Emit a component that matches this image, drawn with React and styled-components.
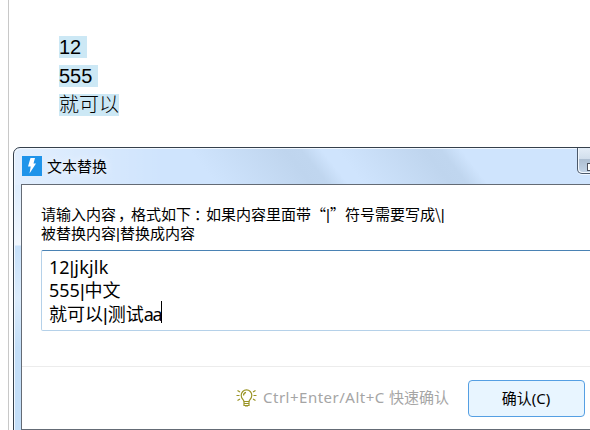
import React from "react";
import styled, { createGlobalStyle } from "styled-components";

const GlobalStyle = createGlobalStyle`
  * {
    box-sizing: border-box;
  }
  html, body {
    margin: 0;
    padding: 0;
    overflow: hidden;
    background: #fff;
  }
`

const Desktop = styled.div`
  position: relative;
  width: 590px;
  height: 430px;
  overflow: hidden;
  background: #fff;
  color: #000;
  font-family: "Noto Sans CJK SC", sans-serif;
`

const Page = styled.div`
  display: flex;
  flex-direction: column;
  align-items: flex-start;
  gap: 7px;
  height: 430px;
  margin-left: 8px;
  padding: 36px 0 0 50px;
  border-left: 1px solid #c8c8c8;
`

const Selected = styled.span`
  width: ${props => props.$width}px;
  height: 22px;
  background: #cce8f5;
  font-family: "Liberation Sans", "Noto Sans CJK SC", sans-serif;
  font-size: 20px;
  font-weight: ${props => props.$light ? 300 : 400};
  line-height: 22px;
  white-space: nowrap;
`

const Dialog = styled.div`
  position: absolute;
  left: 13px;
  top: 147px;
  width: 640px;
  height: 300px;
  padding: 0 7px;
  border: 1px solid #35404c;
  border-radius: 7px 7px 0 0;
  background:
    linear-gradient(90deg, rgba(255,255,255,0.4) 0, rgba(255,255,255,0) 150px) 0 0 / 100% 37px no-repeat,
    linear-gradient(52deg, #cfe4fd 0 160px, #bfd5ee 235px, #c0d6ef 248px, #cfe4fd 264px 276px, #bfd5ee 345px, #c0d6ef 358px, #cfe4fd 374px) 0 0 / 100% 37px no-repeat,
    linear-gradient(180deg, #deedfd 0 40px, #f1f7fe 97px, #c6e0fa 98px, #dcecfc 150px, #c3def8 200px, #c3def8 100%);
  box-shadow: inset 1px 1px 0 #f2f8ff;
`

const TitleBar = styled.div`
  display: flex;
  align-items: center;
  height: 36px;
  padding-left: 1px;
`

const AppIcon = styled.svg`
  width: 20px;
  height: 20px;
  display: block;
`

const Title = styled.span`
  margin-left: 5px;
  font-size: 15px;
  line-height: 20px;
  text-shadow: 0 0 8px #fff;
`

const WindowButton = styled.div`
  position: absolute;
  left: 563px;
  top: 0;
  width: 32px;
  height: 26px;
  border: 1px solid #4b596b;
  border-top: 0;
  border-radius: 0 0 0 5px;
  background: linear-gradient(180deg, #e4edf7 0, #d1deec 44%, #aebfd2 46%, #c3d4e7 100%);
  box-shadow: inset 1px -1px 0 #f3f8fd, 0 1px 0 #edf5ff;
  &::after {
    content: "";
    position: absolute;
    left: 9px;
    top: 15px;
    width: 12px;
    height: 6px;
    border: 1px solid #4b4f5a;
    background: #fff;
  }
`

const Client = styled.div`
  height: 246px;
  border: 1px solid #646b75;
  background: #fff;
`

const Body = styled.div`
  height: 181px;
  padding: 19px 0 0 19px;
`

const Prompt = styled.div`
  height: 46px;
  font-size: 15px;
`

const PromptLine = styled.div`
  height: 19px;
  line-height: 19px;
  white-space: nowrap;
`

const Punct = styled.span`
  display: inline-block;
  width: 15px;
  text-indent: ${props => props.$shift}px;
`

const Bar = styled.span`
  font-family: "Liberation Sans", sans-serif;
  line-height: 1;
`

const TextArea = styled.div`
  width: 590px;
  height: 81px;
  padding: 4px 7px;
  border: 1px solid #b5d1e9;
  border-top-color: #4a82b4;
  border-radius: 2px;
  font-size: 18px;
`

const Line = styled.div`
  display: flex;
  align-items: baseline;
  height: ${props => props.$height || 24}px;
  line-height: 24px;
  white-space: nowrap;
`

const Latin = styled.span`
  font-family: "Noto Sans", sans-serif;
  letter-spacing: ${props => props.$spacing || 0}px;
`

const Caret = styled.span`
  align-self: flex-start;
  width: 1px;
  height: 22px;
  background: #000;
`

const Footer = styled.div`
  display: flex;
  align-items: center;
  height: 63px;
  padding-left: 214px;
  border-top: 1px solid #ececec;
`

const Bulb = styled.svg`
  width: 21px;
  height: 18px;
  display: block;
`

const Hint = styled.span`
  display: flex;
  width: 205px;
  margin-left: 6px;
  padding-bottom: 3px;
  color: #a5a5a5;
  font-size: 15px;
  line-height: 20px;
  white-space: pre;
`

const Shortcut = styled(Latin)`
  width: 126px;
`

const ConfirmButton = styled.button`
  width: 117px;
  height: 37px;
  margin: 0;
  padding: 0 1px 0 0;
  border: 1px solid #559fe3;
  border-radius: 4px;
  background: #e8f5ff;
  color: #000;
  font-family: "Noto Sans", "Noto Sans CJK SC", sans-serif;
  font-size: 15px;
  line-height: 34px;
`

export default function App() {
  return (
    <Desktop>
      <GlobalStyle />
      <Page>
        <Selected $width={28}>12</Selected>
        <Selected $width={39}>555</Selected>
        <Selected $width={60} $light>就可以</Selected>
      </Page>
      <Dialog>
        <TitleBar>
          <AppIcon viewBox="0 0 20 20">
            <rect width="20" height="20" fill="#1f94ea" />
            <path d="M8.5 2H13l-1.500 5.500H14L7.500 17.500l1.200-7H6z" fill="#fff" />
          </AppIcon>
          <Title>文本替换</Title>
        </TitleBar>
        <WindowButton />
        <Client>
          <Body>
            <Prompt>
              <PromptLine>
                请输入内容<Punct $shift={2}>，</Punct>格式如下<Punct $shift={3}>：</Punct>如果内容里面带“<Bar>|</Bar>”符号需要写成\<Bar>|</Bar>
              </PromptLine>
              <PromptLine>被替换内容<Bar>|</Bar>替换成内容</PromptLine>
            </Prompt>
            <TextArea>
              <Line $height={22}><Latin>12</Latin><Bar>|</Bar><Latin $spacing={0.2}>jkjlk</Latin></Line>
              <Line><Latin>555</Latin><Bar>|</Bar>中文</Line>
              <Line>就可以<Bar>|</Bar>测试<Latin $spacing={-1.2}>aa</Latin><Caret /></Line>
            </TextArea>
          </Body>
          <Footer>
            <Bulb viewBox="0 0 21 18" fill="none" stroke="#9a9426" strokeWidth="1.2">
              <path d="M8 12.5C7.500 10.500 5.200 9.500 5.200 6.200a5.300 5.300 0 0 1 10.600 0c0 3.300-2.300 4.300-2.800 6.300z" />
              <path d="M8 12.500v4h5v-4M8 14.500h5M9 17h3M7.500 6.500Q7.500 4 10 3.300" />
              <path d="M0.500 6.500h3M17.500 6.500h3M1.500 1.500l2.500 1.500M19.500 1.500L17 3M1.500 11.500L4 10M19.500 11.500L17 10" />
            </Bulb>
            <Hint><Shortcut $spacing={0.5}>Ctrl+Enter/Alt+C </Shortcut>快速确认</Hint>
            <ConfirmButton>确认(C)</ConfirmButton>
          </Footer>
        </Client>
      </Dialog>
    </Desktop>
  )
}
